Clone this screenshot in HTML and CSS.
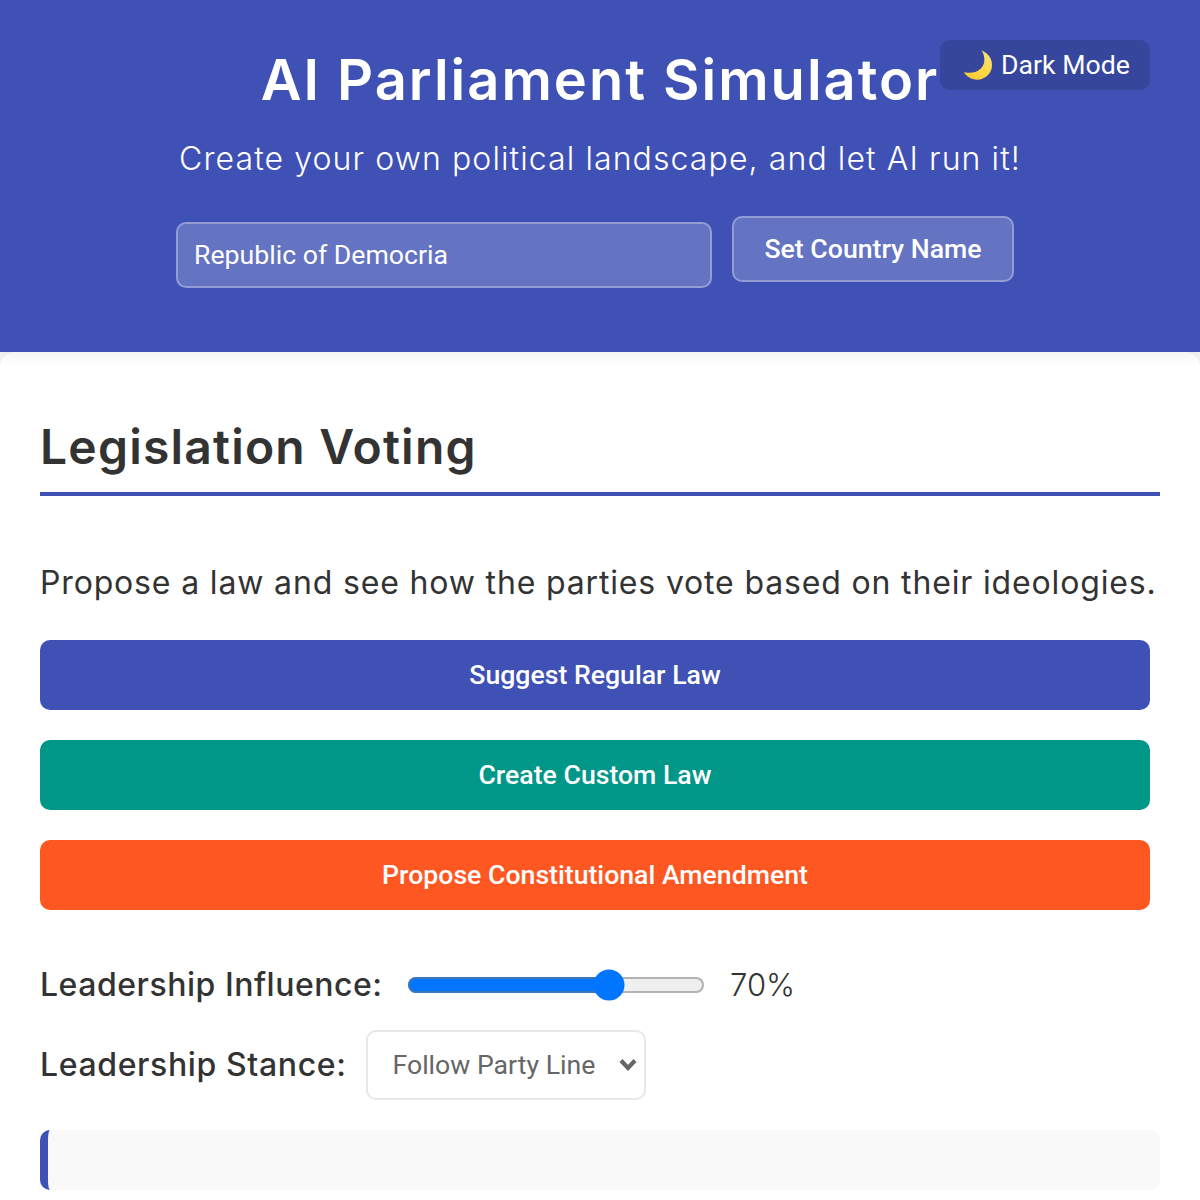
FILE: index.html
```html
<!DOCTYPE html>
<html lang="en">
<head>
<meta charset="utf-8">
<title>AI Parliament Simulator</title>
<link rel="stylesheet" href="styles.css">
</head>
<body>
<header class="site-header">
  <button class="theme-toggle" type="button">
    <svg class="moon" viewBox="0 0 30 30" aria-hidden="true">
      <defs>
        <linearGradient id="moonFill" x1="0.8" y1="0" x2="0.2" y2="1">
          <stop offset="0" stop-color="#f9e27a"/>
          <stop offset="0.6" stop-color="#fcd83f"/>
          <stop offset="1" stop-color="#f5c93a"/>
        </linearGradient>
      </defs>
      <path fill="url(#moonFill)" d="M18.5 0.5C24.5 2.5 29.2 8 29 15.500C28.800 23.500 22 29.800 14 29.700C8.500 29.600 3.500 26.600 0.800 22.300C1.600 22 3 22.500 5 22.700C13.500 23.500 20.500 18.500 21.300 11.500C21.800 7.300 20.600 3.300 18.500 0.500Z"/>
    </svg>
    <span>Dark Mode</span>
  </button>
  <h1 class="site-title">AI Parliament Simulator</h1>
  <p class="site-tagline">Create your own political landscape, and let AI run it!</p>
  <div class="country-row">
    <input class="country-input" type="text" value="Republic of Democria" aria-label="Country name">
    <button class="country-btn" type="button">Set Country Name</button>
  </div>
</header>
<main class="panel">
  <h2 class="panel-title">Legislation Voting</h2>
  <p class="panel-intro">Propose a law and see how the parties vote based on their ideologies.</p>
  <div class="actions">
    <button class="action action-blue" type="button">Suggest Regular Law</button>
    <button class="action action-teal" type="button">Create Custom Law</button>
    <button class="action action-orange" type="button">Propose Constitutional Amendment</button>
  </div>
  <div class="control-row influence-row">
    <label class="control-label" for="influence">Leadership Influence:</label>
    <input class="influence-range" id="influence" type="range" min="0" max="100" value="70">
    <span class="influence-value">70%</span>
  </div>
  <div class="control-row stance-row">
    <label class="control-label stance-label" for="stance">Leadership Stance:</label>
    <div class="stance-wrap">
      <select class="stance-select" id="stance">
        <option>Follow Party Line</option>
      </select>
      <svg class="stance-chevron" viewBox="0 0 18 13" aria-hidden="true">
        <path d="M2 2.500L9 10L16 2.500"/>
      </svg>
    </div>
  </div>
  <div class="result-box"></div>
</main>
</body>
</html>
```
FILE: styles.css
```css
* { box-sizing: border-box; }
html, body { margin: 0; }
body {
  height: 1200px;
  overflow: hidden;
  background: #f5f5f5;
  font-family: Roboto, "Liberation Sans", sans-serif;
  color: #333;
}
.site-header {
  position: relative;
  z-index: 1;
  height: 352px;
  padding-top: 40px;
  background: #3f51b5;
  color: #fff;
  text-align: center;
  box-shadow: 0 4px 12px rgba(0, 0, 0, 0.06);
}
.theme-toggle {
  position: absolute;
  top: 40px;
  right: 50px;
  width: 210px;
  height: 50px;
  display: flex;
  align-items: center;
  justify-content: center;
  gap: 8px;
  padding-left: 3px;
  padding-right: 0;
  border: 0;
  border-radius: 10px;
  background: #36469c;
  color: #fff;
  font: 400 26.67px Roboto, sans-serif;
}
.moon { width: 30px; height: 30px; }
.site-title {
  margin: 0;
  font: 600 56px/80px Inter, sans-serif;
  letter-spacing: 2px;
}
.site-tagline {
  margin: 15px 0 0;
  font: 300 32px/48px Inter, sans-serif;
  letter-spacing: 1.1px;
}
.country-row {
  display: flex;
  justify-content: center;
  align-items: flex-start;
  margin-top: 33px;
}
.country-input {
  width: 536px;
  height: 66px;
  margin-top: 6px;
  margin-right: 20px;
  padding: 0 16px;
  border: 2px solid rgba(255, 255, 255, 0.3);
  border-radius: 10px;
  background: rgba(255, 255, 255, 0.2);
  color: #fff;
  font: 400 26.67px Roboto, sans-serif;
}
.country-btn {
  width: 282px;
  height: 66px;
  margin-right: 10px;
  border: 2px solid rgba(255, 255, 255, 0.3);
  border-radius: 10px;
  background: rgba(255, 255, 255, 0.2);
  color: #fff;
  font: 500 26.67px Roboto, sans-serif;
}
.panel {
  height: 848px;
  padding: 63px 40px 0;
  background: #fff;
  border-radius: 16px 16px 0 0;
}
.panel-title {
  margin: 0;
  padding-bottom: 13px;
  border-bottom: 4px solid #3f51b5;
  color: #333;
  font: 600 48px/64px Inter, sans-serif;
  letter-spacing: 1.2px;
}
.panel-intro {
  margin: 63px 0 0;
  font: 400 32px/48px Inter, sans-serif;
  letter-spacing: 0.84px;
  color: #333;
}
.actions {
  display: flex;
  flex-direction: column;
  gap: 30px;
  margin-top: 33px;
  margin-right: 10px;
}
.action {
  height: 70px;
  border: 0;
  border-radius: 10px;
  color: #fff;
  font: 500 26.67px Roboto, sans-serif;
}
.action-blue { background: #3f51b5; }
.action-teal { background: #009688; }
.action-orange { background: #ff5722; }
.control-row {
  display: flex;
  align-items: center;
}
.control-label {
  font: 500 32px/48px Inter, sans-serif;
  letter-spacing: 0.52px;
  color: #333;
}
.stance-label { letter-spacing: 0.62px; }
.influence-row { margin-top: 51px; }
.influence-range {
  zoom: 2;
  width: 149px;
  margin: 0 0 0 12.25px;
}
.influence-value {
  margin-left: 25px;
  font: 300 31px/48px Inter, sans-serif;
  color: #333;
}
.stance-row { margin-top: 21px; }
.stance-wrap {
  position: relative;
  margin-left: 20px;
}
.stance-select {
  display: block;
  width: 280px;
  height: 70px;
  padding: 0 0 0 24px;
  appearance: none;
  border: 2px solid #e8e8e8;
  border-radius: 10px;
  background: #fff;
  color: #666;
  font: 400 26.67px Roboto, sans-serif;
}
.stance-chevron {
  position: absolute;
  top: 28px;
  right: 9px;
  width: 18px;
  height: 13px;
  fill: none;
  stroke: #666;
  stroke-width: 4.2;
  pointer-events: none;
}
.result-box {
  height: 60px;
  margin-top: 30px;
  border-left: 8px solid #3f51b5;
  border-radius: 10px;
  background: #f9f9f9;
}
```
